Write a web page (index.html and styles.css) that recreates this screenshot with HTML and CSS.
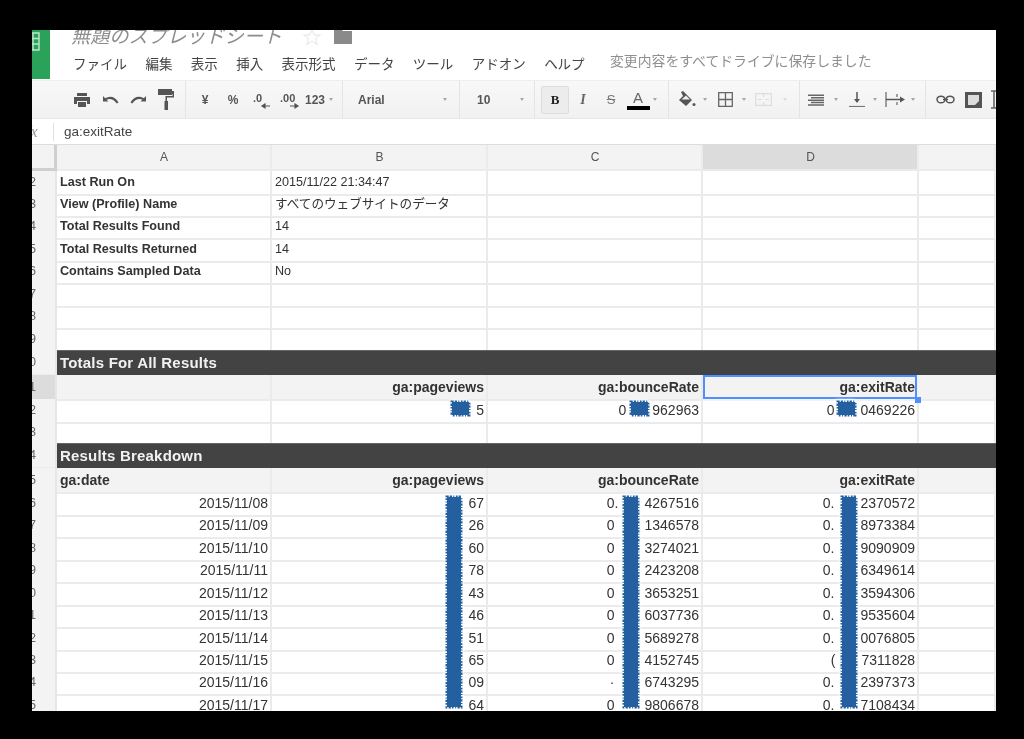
FILE: index.html
```html
<!DOCTYPE html>
<html lang="ja">
<head>
<meta charset="utf-8">
<title>無題のスプレッドシート</title>
<link rel="stylesheet" href="styles.css">
</head>
<body>
<main class="window">
  <header class="top">
    <div class="logo">
      <svg width="18" height="49" viewBox="0 0 18 49"><path d="M-5 3H7V20H-5M-5 8.500H7M-5 14H7M1 3V20" fill="none" stroke="#bfe6cd" stroke-width="1.400"/></svg>
    </div>
    <div class="titles">
      <div class="title-row">
        <span class="doc-title">無題のスプレッドシート</span>
        <svg class="star" width="20" height="18" viewBox="0 0 20 18"><path d="M10 1.500 12.300 7H18L13.500 10.500 15.200 16.500 10 13 4.800 16.500 6.500 10.500 2 7H7.700Z" fill="none" stroke="#ececec" stroke-width="1.300"/></svg>
        <svg class="folder" width="18" height="15" viewBox="0 0 18 15"><path d="M0 0H7L9 2H18V15H0Z" fill="#8a8a8a"/></svg>
      </div>
      <nav class="menu">
        <span>ファイル</span><span>編集</span><span>表示</span><span>挿入</span><span>表示形式</span><span>データ</span><span>ツール</span><span>アドオン</span><span>ヘルプ</span>
        <span class="saved">変更内容をすべてドライブに保存しました</span>
      </nav>
    </div>
  </header>

  <div class="toolbar">
    <div class="grp g1">
      <span class="i w28"><svg width="16" height="14" viewBox="0 0 16 14"><path d="M3 0H13V3H3ZM0 4H16V11H13V8H3V11H0ZM4 9H12V14H4Z" fill="#555"/></svg></span>
      <span class="i w28"><svg width="17" height="8" viewBox="0 0 17 8"><path d="M1 0V5.500H6.500L4.600 3.800C7.500 2.200 11.500 3 14.800 7.500L16.500 6.500C13.500 .8 8 -.8 3.200 2.300Z" fill="#555"/></svg></span>
      <span class="i w28"><svg width="17" height="8" viewBox="0 0 17 8"><path d="M16 0V5.500H10.500L12.400 3.800C9.500 2.200 5.500 3 2.200 7.500L.5 6.500C3.500 .8 9 -.8 13.800 2.300Z" fill="#555"/></svg></span>
      <span class="i w28"><svg width="16" height="21" viewBox="0 0 16 21"><path d="M0 0H14V2H16V8.500H9V12H10V21H6.500V12H7.500V7H14.500V5H14V6H0Z" fill="#555"/></svg></span>
    </div>
    <div class="grp g2">
      <span class="i w28 bold">¥</span>
      <span class="i w28 bold">%</span>
      <span class="i w28"><svg width="22" height="20" viewBox="0 0 22 20"><text x="3" y="12" class="svgt">.0</text><path d="M20 16H13M15 14 12 16 15 18Z" stroke="#555" stroke-width="1.200" fill="#555"/></svg></span>
      <span class="i w28"><svg width="26" height="20" viewBox="0 0 26 20"><text x="4" y="12" class="svgt">.00</text><path d="M14 16H21M19 14 22 16 19 18Z" stroke="#555" stroke-width="1.200" fill="#555"/></svg></span>
      <span class="i w24 bold">123</span>
      <span class="i w8 arr"></span>
    </div>
    <div class="grp g3">
      <span class="fname">Arial</span>
      <span class="i w8 arr"></span>
    </div>
    <div class="grp g4">
      <span class="fsize">10</span>
      <span class="i w8 arr"></span>
    </div>
    <div class="grp g5">
      <span class="i w28 active"><b class="serif">B</b></span>
      <span class="i w28"><i class="serif">I</i></span>
      <span class="i w28"><span class="strike">S</span></span>
      <span class="i w26 acolor"><span class="a">A</span></span>
      <span class="i w8 arr"></span>
    </div>
    <div class="grp g6">
      <span class="i w20"><svg width="18" height="17" viewBox="0 0 18 17"><path d="M3 1 5 0 9 4 14 9 8 15 1 9 5 5Z" fill="#555"/><path d="M3.500 8.500H12L8 4.500Z" fill="#eee"/><circle cx="16" cy="13.500" r="1.500" fill="#555"/></svg></span>
      <span class="i w16 arr"></span>
      <span class="i w24"><svg width="15" height="15" viewBox="0 0 15 15"><path d="M.7.700H14.300V14.300H.7ZM7.500.7V14.300M.7 7.500H14.300" fill="none" stroke="#666" stroke-width="1.300"/></svg></span>
      <span class="i w14 arr"></span>
      <span class="i w24"><svg width="17" height="13" viewBox="0 0 17 13"><path d="M.7.700H16.300V12.300H.7ZM8.500.7V4M8.500 9V12.300M3 6.500H7M14 6.500H10" fill="none" stroke="#ddd" stroke-width="1.200"/></svg></span>
      <span class="i w20 arr light"></span>
    </div>
    <div class="grp g7">
      <span class="i w20"><svg width="16" height="12" viewBox="0 0 16 12"><path d="M0 .5H16V2H0ZM3 3H16V4.500H3ZM0 5.400H16V6.900H0ZM3 7.800H16V9.300H3ZM0 10.200H16V11.700H0Z" fill="#666"/></svg></span>
      <span class="i w20 arr"></span>
      <span class="i w22"><svg width="16" height="15" viewBox="0 0 16 15"><path d="M8 0V8" stroke="#555" stroke-width="1.500"/><path d="M5 7H11L8 11Z" fill="#555"/><path d="M0 14.500H16" stroke="#777" stroke-width="1.200"/></svg></span>
      <span class="i w14 arr"></span>
      <span class="i w26"><svg width="21" height="17" viewBox="0 0 21 17"><path d="M1 1V16M12 3V6M12 11V14" stroke="#666" stroke-width="1.200"/><path d="M1 8.500H16" stroke="#555" stroke-width="1.500"/><path d="M15 5.500 20 8.500 15 11.500Z" fill="#555"/></svg></span>
      <span class="i w10 arr"></span>
    </div>
    <div class="grp g8">
      <span class="i w23"><svg width="19" height="9" viewBox="0 0 19 9"><ellipse cx="5" cy="4.500" rx="4" ry="3.300" fill="none" stroke="#555" stroke-width="1.500"/><ellipse cx="14" cy="4.500" rx="4" ry="3.300" fill="none" stroke="#555" stroke-width="1.500"/><path d="M7 4.500H12" stroke="#555" stroke-width="1.500"/></svg></span>
      <span class="i w32"><svg width="17" height="16" viewBox="0 0 17 16"><path d="M0 0H17V16H0Z" fill="#555"/><path d="M3 3H14V9L10 13H3Z" fill="#ddd"/></svg></span>
      <span class="i w10"><svg width="8" height="19" viewBox="0 0 8 19"><path d="M1 1H7M1 18H7M4 1V18" fill="none" stroke="#666" stroke-width="1.600"/></svg></span>
    </div>
  </div>

  <div class="formula">
    <span class="fx">fx</span>
    <span class="ftext">ga:exitRate</span>
  </div>

  <section class="sheet">
    <div class="row colhead">
      <div class="corner"></div><div>A</div><div>B</div><div>C</div><div class="hot">D</div><div></div>
    </div>
    <div class="row"><div class="rh">2</div><div class="b">Last Run On</div><div>2015/11/22 21:34:47</div><div></div><div></div><div></div></div>
    <div class="row"><div class="rh">3</div><div class="b">View (Profile) Name</div><div>すべてのウェブサイトのデータ</div><div></div><div></div><div></div></div>
    <div class="row"><div class="rh">4</div><div class="b">Total Results Found</div><div>14</div><div></div><div></div><div></div></div>
    <div class="row"><div class="rh">5</div><div class="b">Total Results Returned</div><div>14</div><div></div><div></div><div></div></div>
    <div class="row"><div class="rh">6</div><div class="b">Contains Sampled Data</div><div>No</div><div></div><div></div><div></div></div>
    <div class="row"><div class="rh">7</div><div></div><div></div><div></div><div></div><div></div></div>
    <div class="row"><div class="rh">8</div><div></div><div></div><div></div><div></div><div></div></div>
    <div class="row"><div class="rh">9</div><div></div><div></div><div></div><div></div><div></div></div>
    <div class="row dark"><div class="rh">10</div><div class="band">Totals For All Results</div></div>
    <div class="row head"><div class="rh hot">11</div><div></div><div class="r">ga:pageviews</div><div class="r">ga:bounceRate</div><div class="r sel">ga:exitRate<span class="handle"></span></div><div></div></div>
    <div class="row"><div class="rh">12</div><div></div><div class="r">5</div><div class="r">0<span class="gap-s"></span>962963</div><div class="r">0<span class="gap-s"></span>0469226</div><div></div></div>
    <div class="row"><div class="rh">13</div><div></div><div></div><div></div><div></div><div></div></div>
    <div class="row dark"><div class="rh">14</div><div class="band">Results Breakdown</div></div>
    <div class="row head"><div class="rh">15</div><div>ga:date</div><div class="r">ga:pageviews</div><div class="r">ga:bounceRate</div><div class="r">ga:exitRate</div><div></div></div>
    <div class="row"><div class="rh">16</div><div class="r">2015/11/08</div><div class="r">67</div><div class="r">0.<span class="gap"></span>4267516</div><div class="r">0.<span class="gap"></span>2370572</div><div></div></div>
    <div class="row"><div class="rh">17</div><div class="r">2015/11/09</div><div class="r">26</div><div class="r">0<span class="gap-w"></span>1346578</div><div class="r">0.<span class="gap"></span>8973384</div><div></div></div>
    <div class="row"><div class="rh">18</div><div class="r">2015/11/10</div><div class="r">60</div><div class="r">0<span class="gap-w"></span>3274021</div><div class="r">0.<span class="gap"></span>9090909</div><div></div></div>
    <div class="row"><div class="rh">19</div><div class="r">2015/11/11</div><div class="r">78</div><div class="r">0<span class="gap-w"></span>2423208</div><div class="r">0.<span class="gap"></span>6349614</div><div></div></div>
    <div class="row"><div class="rh">20</div><div class="r">2015/11/12</div><div class="r">43</div><div class="r">0<span class="gap-w"></span>3653251</div><div class="r">0.<span class="gap"></span>3594306</div><div></div></div>
    <div class="row"><div class="rh">21</div><div class="r">2015/11/13</div><div class="r">46</div><div class="r">0<span class="gap-w"></span>6037736</div><div class="r">0.<span class="gap"></span>9535604</div><div></div></div>
    <div class="row"><div class="rh">22</div><div class="r">2015/11/14</div><div class="r">51</div><div class="r">0<span class="gap-w"></span>5689278</div><div class="r">0.<span class="gap"></span>0076805</div><div></div></div>
    <div class="row"><div class="rh">23</div><div class="r">2015/11/15</div><div class="r">65</div><div class="r">0<span class="gap-w"></span>4152745</div><div class="r">(<span class="gap"></span>7311828</div><div></div></div>
    <div class="row"><div class="rh">24</div><div class="r">2015/11/16</div><div class="r">09</div><div class="r">·<span class="gap-w"></span>6743295</div><div class="r">0.<span class="gap"></span>2397373</div><div></div></div>
    <div class="row"><div class="rh">25</div><div class="r">2015/11/17</div><div class="r">64</div><div class="r">0<span class="gap-w"></span>9806678</div><div class="r">0.<span class="gap"></span>7108434</div><div></div></div>

    <svg class="redact blk1" width="21" height="17"><rect x="2" y="2" width="17" height="13"/></svg>
    <svg class="redact blk2" width="21" height="17"><rect x="2" y="2" width="17" height="13"/></svg>
    <svg class="redact blk3" width="21" height="17"><rect x="2" y="2" width="17" height="13"/></svg>
    <svg class="redact bar1" width="18" height="214"><rect x="2" y="2" width="14" height="210"/></svg>
    <svg class="redact bar2" width="18" height="214"><rect x="2" y="2" width="14" height="210"/></svg>
    <svg class="redact bar3" width="18" height="214"><rect x="2" y="2" width="14" height="210"/></svg>
  </section>
</main>
</body>
</html>
```
FILE: styles.css
```css
* { box-sizing: border-box; }
html, body { margin: 0; height: 739px; background: #000; overflow: hidden; }
body { padding: 30px 28px 28px 32px; font-family: "Liberation Sans", "Noto Sans CJK JP", sans-serif; color: #333; }

.window { width: 964px; height: 681px; background: #fff; overflow: hidden; filter: blur(0.7px); display: flex; flex-direction: column; }

.top { height: 50px; display: flex; flex: none; }
.logo { width: 18px; height: 49px; background: #2ba25a; flex: none; }
.logo svg { display: block; }
.titles { padding-left: 23px; flex: 1; overflow: hidden; }
.title-row { height: 14px; display: flex; position: relative; }
.doc-title { font-family: "Noto Sans CJK JP", sans-serif; font-size: 19.200px; line-height: 28px; height: 28px; color: #8d8d8d; font-style: italic; flex: none; margin-top: -9px; margin-left: -2px; align-self: flex-start; white-space: nowrap; }
.star { margin-left: 20px; align-self: flex-start; margin-top: -2px; flex: none; }
.folder { margin-left: 12px; align-self: flex-start; margin-top: -1px; flex: none; }
.menu { display: flex; gap: 18.400px; margin-top: 8px; height: 22px; align-items: center; font-family: "Noto Sans CJK JP", sans-serif; font-size: 13.500px; color: #444; white-space: nowrap; }
.menu .saved { margin-left: 7px; font-size: 13.850px; color: #8f8f8f; position: relative; top: -3px; }

.toolbar { height: 39px; flex: none; display: flex; background: linear-gradient(#f8f8f8, #f1f1f1); border-top: 1px solid #eee; border-bottom: 1px solid #e6e6e6; color: #555; font-size: 12px; }
.grp { display: flex; align-items: center; border-right: 1px solid #e4e4e4; flex: none; }
.g1 { width: 154px; padding-left: 36px; }
.g2 { width: 157px; padding-left: 5px; }
.g3 { width: 117px; padding-left: 15px; }
.g4 { width: 75px; padding-left: 17px; }
.g5 { width: 134px; padding-left: 6px; }
.g6 { width: 131px; padding-left: 8px; }
.g7 { width: 126px; padding-left: 6px; }
.g8 { width: 70px; padding-left: 8px; border-right: 0; }
.i { display: flex; align-items: center; justify-content: center; height: 100%; flex: none; }
.w8 { width: 8px; } .w10 { width: 10px; } .w14 { width: 14px; } .w16 { width: 16px; } .w20 { width: 20px; }
.w22 { width: 22px; } .w23 { width: 23px; } .w24 { width: 24px; } .w26 { width: 26px; } .w28 { width: 28px; } .w32 { width: 32px; }
.bold { font-weight: 700; }
.svgt { font: 700 11px "Liberation Sans", sans-serif; fill: #555; }
.arr::after { content: ""; border-left: 2.500px solid transparent; border-right: 2.500px solid transparent; border-top: 3px solid #a5a5a5; }
.arr.light::after { border-top-color: #dcdcdc; }
.fname { width: 83px; font-weight: 700; font-size: 12px; }
.fsize { width: 41px; font-weight: 700; font-size: 12px; }
.active { height: 28px; background: #ececec; border: 1px solid #dddddd; border-radius: 2px; }
.serif { font-family: "Liberation Serif", serif; font-size: 13px; }
b.serif { font-weight: 700; color: #222; }
i.serif { font-weight: 700; font-size: 14px; color: #666; }
.strike { font-size: 13px; color: #777; text-decoration: line-through; }
.acolor { flex-direction: column; justify-content: center; }
.a { font-size: 15px; line-height: 16px; color: #666; width: 23px; text-align: center; border-bottom: 4px solid #000; }

.formula { height: 26px; flex: none; display: flex; align-items: center; border-bottom: 1px solid #ddd; font-size: 13.500px; color: #444; }
.fx { width: 22px; height: 18px; padding-left: 0; border-right: 1px solid #e2e2e2; font: italic 16px/18px "Liberation Serif", serif; color: #999; text-indent: -6px; flex: none; }
.ftext { margin-left: 10px; }

.sheet { position: relative; flex: 1; overflow: hidden; font-size: 12.600px; }
.row { display: grid; grid-template-columns: 25px 215px 216px 215px 216px 77px; height: 22.450px; line-height: 23px; }
.row > div { border-right: 2px solid #ebebeb; border-bottom: 2px solid #ebebeb; padding: 0 2px 0 3px; white-space: nowrap; overflow: hidden; }
.row > .rh { background: #f3f3f3; padding: 0 19px 0 0; text-align: right; overflow: visible; color: #666; direction: rtl; font-weight: 400; font-size: 12.600px; border-right-color: #e6e6e6; }
.row > .b { font-weight: 700; }
.row > .r { text-align: right; font-size: 14px; }
.colhead { height: 25.500px; line-height: 24px; }
.colhead > div { background: #f3f3f3; text-align: center; color: #555; font-size: 12px; }
.colhead > .corner { background: #f3f3f3; border-right: 3px solid #cfcfcf; border-bottom: 3px solid #cfcfcf; }
.colhead > .hot { background: #dcdcdc; }
.row > .rh.hot { background: #dcdcdc; }
.row.dark { height: 24.500px; line-height: 24px; grid-template-columns: 25px 1fr; }
.row.dark > .band { background: #434343; color: #f2f2f2; font-weight: 700; font-size: 15px; letter-spacing: .2px; border: 0; border-top: 1px solid #666; }
.row.head { height: 24px; line-height: 24px; }
.head > div { background: #f3f3f3; font-weight: 700; font-size: 14px; }
.row > .sel { position: relative; overflow: visible; box-shadow: inset 0 0 0 2px #4d90fe; border-color: transparent; }
.handle { position: absolute; right: -4px; bottom: -4px; width: 6px; height: 6px; background: #4d90fe; }

.gap { display: inline-block; width: 26px; }
.gap-w { display: inline-block; width: 30px; }
.gap-s { display: inline-block; width: 26px; }

.redact { position: absolute; filter: drop-shadow(0 0 1.500px #fff) drop-shadow(0 0 1.500px #fff); overflow: visible; }
.redact rect { fill: #24609f; stroke: #24609f; stroke-width: 3; stroke-dasharray: 1.700 1 2.300 1.300 1 1.600; }
.blk1 { left: 418px; top: 255px; }
.blk2 { left: 597px; top: 255px; }
.blk3 { left: 804px; top: 255px; }
.bar1 { left: 413px; top: 350px; }
.bar2 { left: 590px; top: 350px; }
.bar3 { left: 808px; top: 350px; }
```
